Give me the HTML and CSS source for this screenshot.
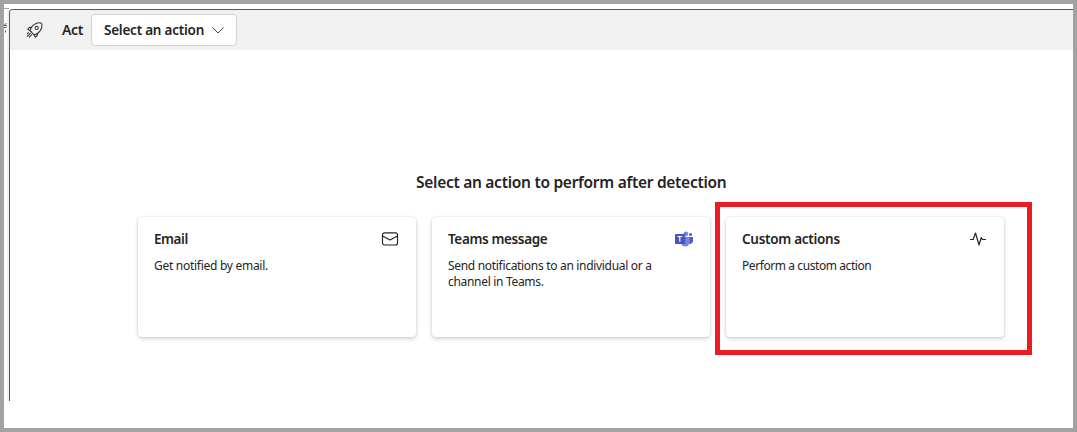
FILE: index.html
```html
<!DOCTYPE html>
<html lang="en">
<head>
<meta charset="utf-8">
<title>Act</title>
<link rel="stylesheet" href="styles.css">
</head>
<body>
<div class="window">
  <div class="gutter">
    <svg width="3" height="12" viewBox="0 0 3 12" fill="none" stroke="#555" stroke-width="1"><path d="M0 3.5 2.5 1M0 3.5h3M0 5.5h2.5M1.5 8.5v2"/></svg>
  </div>
  <main class="panel">
    <header class="toolbar">
      <svg class="rocket" width="17" height="17" viewBox="0 0 17 17" fill="none" stroke="#303030" stroke-width="1.05" stroke-linecap="round" stroke-linejoin="round">
        <path d="M5.2 9.9 3.9 8.6c1-3.2 3-6 6.2-7.200 1.6-.7 3.400-.8 4.500-.5.7.200 1 .5 1.200 1.200.3 1.200.1 3-.5 4.600-1.200 3-4 5.200-7.200 6.200L6.800 11.500"/>
        <path d="M5.100 5.500 3.700 5.200 1.700 7.400 3.900 8.600M11 11.500l.4 1.600-2 2.200-1.300-2.400M5.200 9.900l1.600 1.600M4.200 11.300 1.200 14.300M2.600 10.500 1.400 11.700M5.700 12.700 3.300 15.200"/>
        <circle cx="10.700" cy="5.900" r="1.600"/>
      </svg>
      <span class="act">Act</span>
      <button class="select"><span>Select an action</span>
        <svg width="12" height="7" viewBox="0 0 12 7" fill="none" stroke="#444" stroke-width="1" stroke-linecap="round" stroke-linejoin="round"><path d="M.7.7 6 6 11.300.7"/></svg>
      </button>
    </header>
    <section class="content">
      <h1 class="heading">Select an action to perform after detection</h1>
      <div class="cards">
        <article class="card">
          <div class="card-head"><h2 class="title title-email">Email</h2>
            <svg width="18" height="14" viewBox="0 0 18 14" fill="none" stroke="#242424" stroke-width="1.150" stroke-linejoin="round"><rect x="1.500" y=".8" width="15" height="12.200" rx="2"/><path d="M1.500 4 9 8 16.500 4"/></svg>
          </div>
          <p class="text text-email">Get notified by email.</p>
        </article>
        <article class="card">
          <div class="card-head"><h2 class="title title-teams">Teams message</h2>
            <svg width="18" height="16" viewBox="0 0 18 16">
              <circle cx="15.500" cy="3.500" r="1.500" fill="#5059c9"/>
              <path d="M12 6h5.500c.3 0 .5.200.5.500V10a3 3 0 0 1-5.500 1.600Z" fill="#5059c9"/>
              <circle cx="11" cy="2.700" r="2.300" fill="#7b83eb"/>
              <path d="M6 6h8c.4 0 .7.300.7.700v4.300a4.500 4.500 0 0 1-9 0Z" fill="#7b83eb"/>
              <path d="M8.700 2.600h1.800v10.200H6.200L5.700 6Z" fill="#464eb8" opacity=".65"/>
              <rect y="3" width="9.500" height="10" rx=".8" fill="#4b53bc"/>
              <path d="M2.400 5.500h4.800M4.800 5.500v5.200" stroke="#fff" stroke-width="1.200"/>
            </svg>
          </div>
          <p class="text text-teams">Send notifications to an individual or a<br>channel in Teams.</p>
        </article>
        <article class="card">
          <div class="card-head"><h2 class="title title-custom">Custom actions</h2>
            <svg width="18" height="16" viewBox="0 0 18 16" fill="none" stroke="#242424" stroke-width="1.200" stroke-linecap="round" stroke-linejoin="round"><path d="M1.500 8.500h2.600L6.500 2 10 14l2.300-7.500 1.200 2h3"/></svg>
          </div>
          <p class="text text-custom">Perform a custom action</p>
          <div class="highlight"></div>
        </article>
      </div>
    </section>
  </main>
</div>
</body>
</html>
```
FILE: styles.css
```css
* { box-sizing: border-box; }
body { margin: 0; font-family: "Noto Sans", sans-serif; color: #242424; background: #fff; }
svg { display: block; flex: none; }
.window { display: flex; height: 432px; border: 4px solid #a3a3a3; padding-top: 5px; }
.gutter { width: 5px; margin-top: -1px; padding-top: 13px; height: 393px; border-top: 1px solid #97aaa1; background: linear-gradient(to right, #fff 3px, #edf4f1 3px); }
.panel { flex: 1; height: 392px; border: solid #416052; border-width: 1px 0 0 1px; border-top-left-radius: 4px; overflow: hidden; }
.toolbar { display: flex; align-items: center; height: 40px; background: #f1f1f1; padding-left: 16px; }
.act { width: 29px; margin-left: 19px; padding-bottom: 1px; font-size: 14px; font-weight: 600; letter-spacing: -.4px; }
.select { display: flex; align-items: center; justify-content: space-between; width: 146px; height: 32px; padding: 0 12px; border: 1px solid #d1d1d1; border-radius: 4px; background: #fff; color: #242424; font: 600 13.5px "Noto Sans", sans-serif; letter-spacing: -.23px; white-space: nowrap; }
.content { padding-top: 121px; }
.heading { margin: 0 0 0 406px; font-size: 15.5px; line-height: 22px; font-weight: 600; letter-spacing: -.28px; white-space: nowrap; }
.cards { display: flex; gap: 16px; margin: 24px 0 0 128px; }
.card { position: relative; width: 278px; height: 120px; padding: 12px 17px 12px 16px; border-radius: 4px; background: #fff; box-shadow: 0 0 2px rgba(0,0,0,.16), 0 2px 4px rgba(0,0,0,.16); }
.card-head { display: flex; align-items: center; justify-content: space-between; height: 20px; }
.title { margin: 0; font-size: 13.5px; line-height: 20px; font-weight: 600; white-space: nowrap; }
.title-email { letter-spacing: -.45px; }
.title-teams { letter-spacing: -.37px; }
.title-custom { letter-spacing: -.28px; }
.text { margin: 9px 0 0; font-size: 12px; line-height: 16px; white-space: nowrap; }
.text-email { letter-spacing: -.28px; }
.text-teams { letter-spacing: -.31px; }
.text-custom { letter-spacing: -.42px; }
.highlight { position: absolute; left: -11px; top: -15px; width: 317px; height: 153px; border: 5px solid #eb1c24; }
```
